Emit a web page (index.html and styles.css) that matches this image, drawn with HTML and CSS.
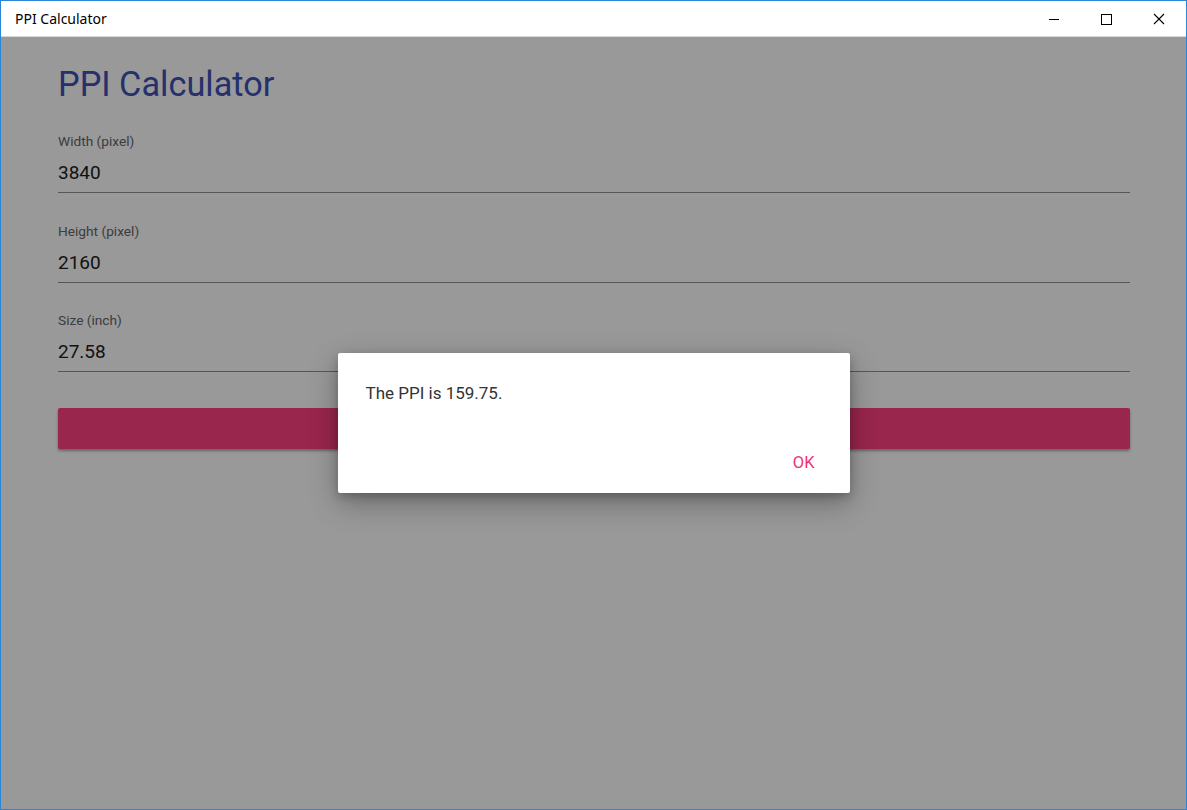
FILE: index.html
```html
<!DOCTYPE html>
<html>
<head>
<meta charset="utf-8">
<link rel="stylesheet" href="styles.css">
</head>
<body>
<div class="window">
  <div class="titlebar">
    <div class="title">PPI Calculator</div>
    <div class="controls">
      <div class="ctl"><svg width="12" height="12" viewBox="0 0 12 12"><path d="M1 6.5H11" stroke="#000" stroke-width="1"/></svg></div>
      <div class="ctl"><svg width="12" height="12" viewBox="0 0 12 12"><rect x="1.5" y="1.5" width="10" height="10" fill="none" stroke="#000" stroke-width="1"/></svg></div>
      <div class="ctl"><svg width="12" height="12" viewBox="0 0 12 12"><path d="M1 1L11 11M11 1L1 11" stroke="#000" stroke-width="1.1"/></svg></div>
    </div>
  </div>
  <div class="content">
    <main class="page">
      <h1 class="heading">PPI Calculator</h1>
      <div class="field">
        <div class="label">Width (pixel)</div>
        <div class="value">3840</div>
      </div>
      <div class="field">
        <div class="label">Height (pixel)</div>
        <div class="value">2160</div>
      </div>
      <div class="field">
        <div class="label">Size (inch)</div>
        <div class="value">27.58</div>
      </div>
      <div class="button"></div>
    </main>
    <div class="overlay">
      <div class="dialog">
        <div class="message">The PPI is 159.75.</div>
        <div class="actions"><span class="ok">OK</span></div>
      </div>
    </div>
  </div>
</div>
</body>
</html>
```
FILE: styles.css
```css
html, body {
  margin: 0;
  padding: 0;
}
body {
  width: 1187px;
  height: 810px;
  overflow: hidden;
  font-family: Roboto, "Noto Sans", sans-serif;
}
.window {
  box-sizing: border-box;
  width: 1187px;
  height: 810px;
  border: 1px solid #2b86d9;
  display: flex;
  flex-direction: column;
  background: #fff;
}
.titlebar {
  height: 35px;
  flex: none;
  display: flex;
  align-items: center;
  justify-content: space-between;
  background: #fff;
  border-bottom: 1px solid #d8d8d8;
}
.title {
  font-family: "Noto Sans", "Open Sans", sans-serif;
  font-size: 14px;
  color: #000;
  padding-left: 14px;
}
.controls {
  display: flex;
  height: 100%;
}
.ctl {
  width: 52px;
  height: 100%;
  display: flex;
  align-items: center;
  justify-content: center;
}
.controls .ctl:last-child {
  width: 54px;
}
.content {
  flex: 1;
  position: relative;
  background: #fff;
}
.page {
  padding: 22px 56px 0 57px;
}
.heading {
  margin: 0 0 23px;
  font-weight: 400;
  font-size: 34.3px;
  line-height: 50px;
  color: #3f51b5;
}
.field {
  height: 89.5px;
}
.label {
  font-size: 13.7px;
  line-height: 18px;
  color: #666;
  margin-bottom: 9px;
}
.value {
  font-size: 19px;
  line-height: 28px;
  color: #212121;
  padding-bottom: 5px;
  border-bottom: 1px solid #909090;
}
.button {
  margin-top: 7px;
  height: 41px;
  background: #ff4081;
  border-radius: 2px;
  box-shadow: 0 2px 3px rgba(0,0,0,0.35);
}
.overlay {
  position: absolute;
  inset: 0;
  background: rgba(0,0,0,0.4);
  display: flex;
  align-items: center;
  justify-content: center;
}
.dialog {
  width: 512px;
  height: 140px;
  box-sizing: border-box;
  background: #fff;
  border-radius: 2px;
  box-shadow: 0 10px 30px rgba(0,0,0,0.3), 0 4px 10px rgba(0,0,0,0.2);
  display: flex;
  flex-direction: column;
  justify-content: space-between;
  padding: 30px 28px 20px 28px;
}
.message {
  font-size: 17px;
  line-height: 20px;
  color: #333;
}
.actions {
  display: flex;
  justify-content: flex-end;
}
.ok {
  font-size: 16.5px;
  line-height: 20px;
  color: #f2306f;
  padding-right: 7px;
}
```
